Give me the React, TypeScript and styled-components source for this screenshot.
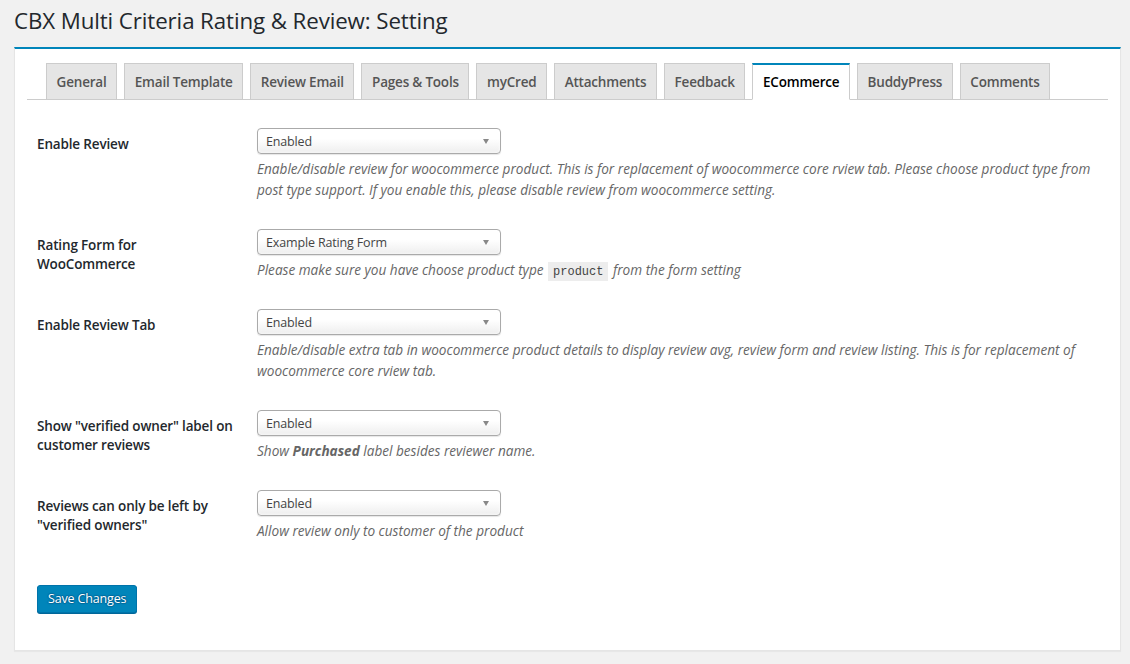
import styled, { createGlobalStyle } from 'styled-components';

const GlobalStyle = createGlobalStyle`
  html, body {
    margin: 0;
    padding: 0;
    background: #f1f1f1;
  }
  body {
    font-family: "Open Sans", "Noto Sans", sans-serif;
    color: #23282d;
    font-size: 13px;
  }
`;

const Page = styled.div`
  width: 1130px;
  height: 664px;
  padding: 0 9px 0 14px;
  box-sizing: border-box;
  overflow: hidden;
`;

const Title = styled.h1`
  margin: 0;
  padding: 6px 0 0;
  height: 41px;
  box-sizing: border-box;
  font-size: 22.3px;
  font-weight: 400;
  line-height: 29px;
  color: #23282d;
  letter-spacing: -0.1px;
`;

const Panel = styled.div`
  background: #fff;
  border: 1px solid #e5e5e5;
  border-top: 2px solid #0085ba;
  box-shadow: 0 1px 1px rgba(0, 0, 0, 0.04);
  margin-top: 6px;
  padding: 14px 12px 37px;
`;

const TabBar = styled.nav`
  display: flex;
  gap: 7px;
  padding-left: 19px;
  border-bottom: 1px solid #ccc;
  height: 36px;
`;

const Tab = styled.a<{ $active?: boolean }>`
  display: flex;
  align-items: center;
  box-sizing: border-box;
  height: ${({ $active }) => ($active ? '37px' : '36px')};
  padding: 0 9.6px;
  font-size: 13.5px;
  font-weight: 600;
  color: ${({ $active }) => ($active ? '#000' : '#555')};
  background: ${({ $active }) => ($active ? '#fff' : '#e5e5e5')};
  border: 1px solid #ccc;
  border-bottom: ${({ $active }) => ($active ? '1px solid #fff' : 'none')};
  border-top: ${({ $active }) => ($active ? '2px solid #0085ba' : '1px solid #ccc')};
  text-decoration: none;
  white-space: nowrap;
  letter-spacing: -0.2px;
`;

const Form = styled.div`
  padding: 0 10px;
  margin-top: 13px;
`;

const Row = styled.div`
  display: flex;
`;

const Label = styled.div`
  width: 200px;
  flex-shrink: 0;
  box-sizing: border-box;
  padding: 22px 2px 19px 0;
  font-size: 13.5px;
  font-weight: 600;
  line-height: 19px;
  color: #23282d;
  letter-spacing: -0.15px;
`;

const Field = styled.div`
  flex: 1;
  padding: 15px 0 14px 20px;
`;

const SelectBox = styled.div`
  position: relative;
  width: 244px;
  height: 26px;
  box-sizing: border-box;
  border: 1px solid #aaa;
  border-radius: 4px;
  background: linear-gradient(to bottom, #fff 0%, #fff 40%, #eee 100%);
  box-shadow: inset 0 0 3px #fff, 0 1px 1px rgba(0, 0, 0, 0.1);
  padding: 0 8px;
  font-size: 12.5px;
  line-height: 26px;
  color: #444;
  letter-spacing: -0.15px;
`;

const Arrow = styled.span`
  position: absolute;
  right: 11px;
  top: 10px;
  width: 0;
  height: 0;
  border-left: 3.5px solid transparent;
  border-right: 3.5px solid transparent;
  border-top: 5px solid #888;
`;

const Desc = styled.p`
  margin: 4px 0 0;
  font-size: 13.6px;
  line-height: 21px;
  font-style: italic;
  color: #666;
`;

const Code = styled.code`
  font-family: "Liberation Mono", "DejaVu Sans Mono", monospace;
  font-style: normal;
  font-size: 12px;
  line-height: 1;
  background: rgba(0, 0, 0, 0.07);
  padding: 3px 5px 2px;
  margin: 0 1px;
  color: #444;
`;

const Submit = styled.div`
  padding: 30px 0 0;
`;

const Button = styled.button`
  display: block;
  height: 28px;
  padding: 0 10px 1px;
  font-family: "Open Sans", "Noto Sans", sans-serif;
  font-size: 12.5px;
  color: #fff;
  background: #0085ba;
  border: 1px solid #0073aa;
  border-radius: 3px;
  box-shadow: 0 1px 0 #006799;
  text-shadow: 0 -1px 1px #006799, 1px 0 1px #006799, 0 1px 1px #006799, -1px 0 1px #006799;
  letter-spacing: -0.15px;
  cursor: pointer;
`;

const tabs = [
  'General',
  'Email Template',
  'Review Email',
  'Pages & Tools',
  'myCred',
  'Attachments',
  'Feedback',
  'ECommerce',
  'BuddyPress',
  'Comments',
];

function Select({ value }: { value: string }) {
  return (
    <SelectBox>
      {value}
      <Arrow />
    </SelectBox>
  );
}

export default function App() {
  return (
    <Page>
      <GlobalStyle />
      <Title>CBX Multi Criteria Rating &amp; Review: Setting</Title>
      <Panel>
        <TabBar>
          {tabs.map((t) => (
            <Tab key={t} $active={t === 'ECommerce'}>
              {t}
            </Tab>
          ))}
        </TabBar>
        <Form>
          <Row>
            <Label>Enable Review</Label>
            <Field>
              <Select value="Enabled" />
              <Desc>
                Enable/disable review for woocommerce product. This is for replacement of woocommerce core rview tab. Please choose product type from post type support. If you enable this, please disable review from woocommerce setting.
              </Desc>
            </Field>
          </Row>
          <Row>
            <Label>
              Rating Form for
              <br />
              WooCommerce
            </Label>
            <Field>
              <Select value="Example Rating Form" />
              <Desc>
                Please make sure you have choose product type <Code>product</Code> from the form setting
              </Desc>
            </Field>
          </Row>
          <Row>
            <Label>Enable Review Tab</Label>
            <Field>
              <Select value="Enabled" />
              <Desc>
                Enable/disable extra tab in woocommerce product details to display review avg, review form and review listing. This is for replacement of woocommerce core rview tab.
              </Desc>
            </Field>
          </Row>
          <Row>
            <Label>Show "verified owner" label on customer reviews</Label>
            <Field>
              <Select value="Enabled" />
              <Desc>
                Show <strong>Purchased</strong> label besides reviewer name.
              </Desc>
            </Field>
          </Row>
          <Row>
            <Label>Reviews can only be left by "verified owners"</Label>
            <Field>
              <Select value="Enabled" />
              <Desc>Allow review only to customer of the product</Desc>
            </Field>
          </Row>
          <Submit>
            <Button>Save Changes</Button>
          </Submit>
        </Form>
      </Panel>
    </Page>
  );
}
